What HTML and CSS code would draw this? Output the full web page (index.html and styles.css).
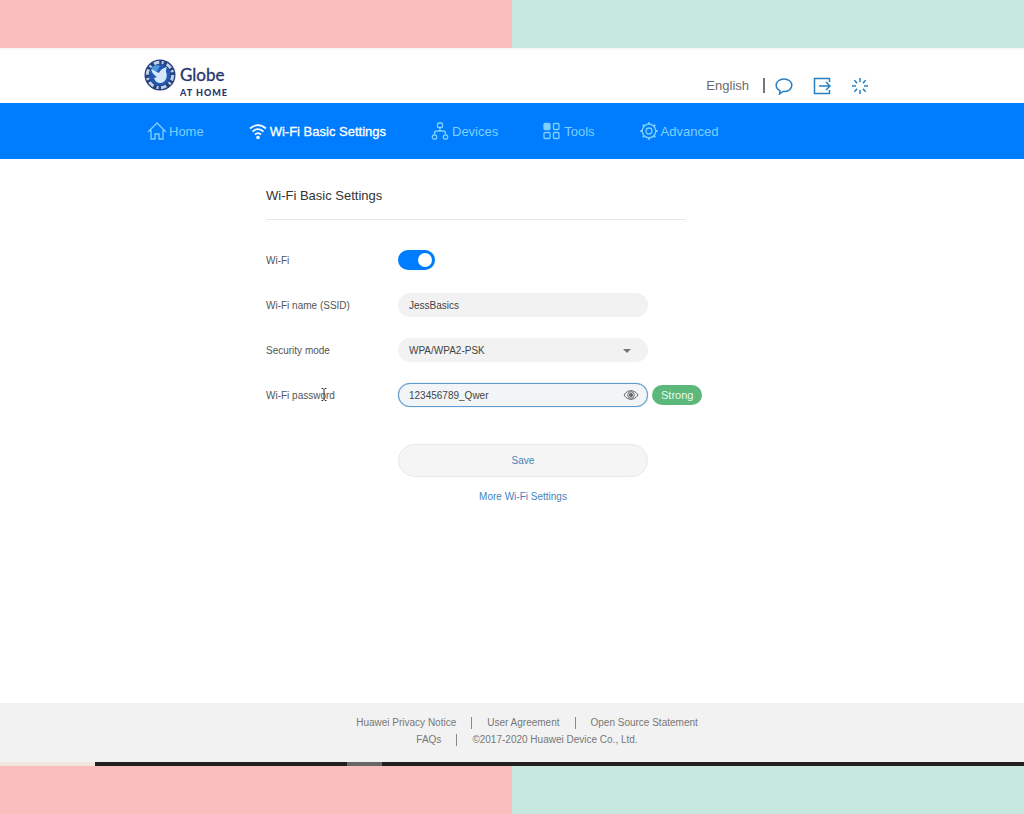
FILE: index.html
```html
<!DOCTYPE html>
<html lang="en">
<head>
<meta charset="utf-8">
<meta name="viewport" content="width=device-width, initial-scale=1">
<title>Wi-Fi Basic Settings</title>
<link rel="stylesheet" href="styles.css">
</head>
<body>
<div class="screen">
  <header class="header">
    <div class="wrap header-row">
      <div class="brand">
        <svg class="brand-mark" viewBox="0 0 32 32" aria-hidden="true">
          <circle cx="16" cy="16" r="15.5" fill="#27437f"/>
          <circle cx="16" cy="16" r="12.7" fill="none" stroke="#c3d0e6" stroke-width="3" stroke-dasharray="5.5 2.5 2 3.3"/>
          <circle cx="16" cy="16" r="10.6" fill="#2459b3"/>
          <path d="M8 8c3-2 6-2 8-1l-3 5-5 2z" fill="#4d9ae0"/>
          <path d="M7 10c3 1 5 3 8 4 1-3 4-5 8-6-1 2-1 3-1 5 2 4 0 10-5 11-4 0-6-2-7-5l3-1c-3-2-5-4-6-8z" fill="#d4e8fa"/>
        </svg>
        <div class="brand-text"><span class="brand-name">Globe</span><span class="brand-sub">AT HOME</span></div>
      </div>
      <div class="tools">
        <button class="language" type="button">English</button>
        <span class="tool-divider"></span>
        <button class="tool" type="button" aria-label="Messages">
          <svg viewBox="0 0 18 18"><path d="M5 13.6C2.500 12.500 1.200 10.600 1.200 8.300c0-3.700 3.400-6.300 7.800-6.300s7.800 2.600 7.800 6.300-3.400 6.200-7.800 6.200H8L4.500 17z"/></svg>
        </button>
        <button class="tool" type="button" aria-label="Log out">
          <svg viewBox="0 0 18 18"><path d="M16.500 5V1.500h-15v15h15V13M6 9h11M13 5l4 4-4 4"/></svg>
        </button>
        <button class="tool" type="button" aria-label="Status">
          <svg viewBox="0 0 18 18"><path d="M9 1v4M9 13v4M1 9h4M13 9h4M3.300 3.300l2.800 2.800M11.900 11.900l2.800 2.800M3.300 14.700l2.800-2.800M11.900 6.100l2.800-2.800"/></svg>
        </button>
      </div>
    </div>
  </header>
  <nav class="nav">
    <div class="wrap nav-row">
      <a class="nav-link" href="#home">
        <svg viewBox="0 0 20 20"><path d="M1 11l9-9 9 9M4 9v9h4v-5h4v5h4V9"/></svg>Home</a>
      <a class="nav-link active" href="#wifi" aria-current="page">
        <svg viewBox="0 0 20 20"><path stroke-width="1.800" d="M2 7.500c5-4.400 11-4.400 16 0M4.500 10.600c3.400-3 7.600-3 11 0M7 13.500c1.800-1.600 4.200-1.600 6 0"/><circle cx="10" cy="16.500" r="1.800" fill="currentColor" stroke="none"/></svg>Wi-Fi Basic Settings</a>
      <a class="nav-link" href="#devices">
        <svg viewBox="0 0 20 20"><rect x="7.500" y="2" width="5" height="4.500" rx="1"/><path d="M10 6.500V10M4.500 14v-1.500C4.500 11 5 10 6.500 10h7c1.500 0 2 1 2 2.500V14"/><circle cx="4.500" cy="16" r="2.200"/><circle cx="15.500" cy="16" r="2.200"/></svg>Devices</a>
      <a class="nav-link" href="#tools">
        <svg viewBox="0 0 20 20"><rect x="2" y="2.500" width="6" height="6" rx="1" fill="currentColor"/><rect x="11.500" y="2.500" width="5.500" height="6" rx="1"/><rect x="2" y="11.500" width="6" height="6" rx="1"/><rect x="11.500" y="11.500" width="5.500" height="6" rx="1"/></svg>Tools</a>
      <a class="nav-link" href="#advanced">
        <svg viewBox="0 0 20 20"><circle cx="10" cy="10" r="6.800"/><path stroke-width="2.200" d="M10 1.300v2M10 16.700v2M1.300 10h2M16.700 10h2M3.900 3.900l1.300 1.300M14.800 14.800l1.300 1.300M3.900 16.100l1.300-1.300M14.800 5.200l1.300-1.300"/><circle cx="10" cy="10" r="3"/></svg>Advanced</a>
    </div>
  </nav>
  <main class="wrap main">
    <form class="settings">
      <h1 class="title">Wi-Fi Basic Settings</h1>
      <div class="row">
        <label class="label" for="wifi-on">Wi-Fi</label>
        <input class="switch" id="wifi-on" type="checkbox" role="switch" checked>
      </div>
      <div class="row">
        <label class="label" for="ssid">Wi-Fi name (SSID)</label>
        <input class="field" id="ssid" type="text" value="JessBasics">
      </div>
      <div class="row">
        <label class="label" for="security">Security mode</label>
        <div class="control">
          <select class="field" id="security"><option>WPA/WPA2-PSK</option></select>
          <svg class="caret" viewBox="0 0 8 4" aria-hidden="true"><path d="M0 0h8L4 4z"/></svg>
        </div>
      </div>
      <div class="row">
        <label class="label" for="password">Wi-Fi password
          <svg class="cursor" viewBox="0 0 6 13" aria-hidden="true"><path d="M.5.500h1.500l1 1 1-1h1.500M3 1.500v10M.5 12.500H2l1-1 1 1h1.500"/></svg>
        </label>
        <div class="control">
          <input class="field focused" id="password" type="text" value="123456789_Qwer">
          <button class="reveal" type="button" aria-label="Hide password">
            <svg viewBox="0 0 16 12"><path d="M1 6c3.500-5.800 10.500-5.800 14 0-3.500 5.800-10.500 5.800-14 0z"/><circle cx="8" cy="6" r="3.300"/><circle cx="8" cy="6" r="1.600" fill="currentColor"/></svg>
          </button>
        </div>
        <span class="strength">Strong</span>
      </div>
      <div class="actions">
        <button class="save" type="button">Save</button>
        <a class="more" href="#more">More Wi-Fi Settings</a>
      </div>
    </form>
  </main>
  <footer class="footer">
    <div class="footer-row">
      <a href="#privacy">Huawei Privacy Notice</a><span class="bar"></span><a href="#agreement">User Agreement</a><span class="bar"></span><a href="#source">Open Source Statement</a>
    </div>
    <div class="footer-row">
      <a href="#faqs">FAQs</a><span class="bar"></span><span>©2017-2020 Huawei Device Co., Ltd.</span>
    </div>
  </footer>
  <div class="taskbar"><span class="task-start"></span><span class="task-item"></span></div>
</div>
</body>
</html>
```
FILE: styles.css
```css
* { box-sizing: border-box; }
body {
  margin: 0;
  min-height: 100vh;
  padding: 48px 0;
  display: flex;
  flex-direction: column;
  background: linear-gradient(90deg, #fabebc 50%, #c7e8e1 50%);
  font-family: "Liberation Sans", Arial, sans-serif;
  font-size: 10px;
  color: #555;
}
button, input, select { font: inherit; color: inherit; }
button { padding: 0; border: 0; background: none; }
a { color: inherit; text-decoration: none; }
svg { display: block; fill: none; stroke: currentColor; }

.screen { flex: 1; display: flex; flex-direction: column; background: #fff; }
.wrap { width: 100%; max-width: 736px; margin: 0 auto; }

.header { border-top: 2px solid #f8f8f8; }
.header-row { display: flex; justify-content: space-between; height: 53px; }
.brand { display: flex; gap: 4px; padding-top: 9px; color: #26346f; }
.brand-mark { width: 32px; height: 32px; stroke: none; }
.brand-text { display: flex; flex-direction: column; padding-top: 6px; }
.brand-name { font: 17px/20px Lato, sans-serif; -webkit-text-stroke: 0.3px #26346f; }
.brand-sub { font: 900 9px/15px Lato, sans-serif; letter-spacing: 1px; }
.tools { display: flex; align-items: center; padding: 18px 11px 0 0; }
.language { font-size: 13px; color: #6a6a6a; }
.tool-divider { width: 2px; height: 15px; margin: 0 10px 0 14px; background: #777; }
.tool { margin-right: 20px; color: #2581c4; }
.tool:last-child { margin-right: 0; }
.tool svg { width: 18px; height: 18px; stroke-width: 1.500; }

.nav { background: #007dff; }
.nav-row { display: flex; align-items: center; gap: 44px; height: 56px; padding-left: 3px; }
.nav-link { display: flex; align-items: center; gap: 2px; font-size: 13px; color: #7fd0ff; white-space: nowrap; }
.nav-link svg { width: 20px; height: 20px; stroke-width: 1.300; }
.nav-link.active { color: #fff; -webkit-text-stroke: 0.3px #fff; }

.main { flex: 1; padding: 28px 0 0 122px; }
.settings { display: flex; flex-direction: column; }
.title { width: 420px; margin: 0 0 28px; padding-bottom: 14px; border-bottom: 1px solid #e6e6e6; font-size: 13px; line-height: 18px; font-weight: 400; color: #333; }
.row { display: flex; align-items: center; height: 24px; margin-bottom: 21px; }
.label { position: relative; width: 132px; }
.cursor { position: absolute; left: 55px; top: -2px; width: 6px; height: 13px; color: #333; }
.control { position: relative; }
.switch { appearance: none; width: 37px; height: 20px; margin: 0; padding: 3px; border-radius: 10px; background: #007dff; }
.switch::before { content: ""; display: block; width: 14px; height: 14px; margin-left: 17px; border-radius: 50%; background: #fff; }
.field { display: block; appearance: none; width: 250px; height: 24px; padding: 0 11px; border: 0; border-radius: 12px; outline: 0; background: #f2f2f2; color: #444; }
.focused { border: 1px solid #5b9bd0; padding: 0 10px; background: #f1f5f8; box-shadow: 0 0 1px #5b9bd0; }
.caret { position: absolute; right: 17px; top: 11px; width: 8px; height: 4px; fill: #777; stroke: none; }
.reveal { position: absolute; right: 9px; top: 6px; color: #666; }
.reveal svg { width: 16px; height: 12px; }
.strength { margin-left: 4px; padding: 0 9px; border-radius: 10px; background: #5cb87a; color: #e8fbee; font-size: 11px; line-height: 20px; }
.actions { display: flex; flex-direction: column; align-items: center; gap: 14px; width: 250px; margin: 16px 0 0 132px; color: #4583bd; }
.save { width: 100%; height: 33px; border: 1px solid #e8e8e8; border-radius: 17px; background: #f5f5f5; }

.footer { padding: 11px 0 14px 30px; background: #f2f2f2; color: #777; line-height: 17px; }
.footer-row { display: flex; justify-content: center; align-items: center; }
.bar { width: 1px; height: 12px; margin: 0 15px; background: #888; }
.taskbar { display: flex; height: 4px; background: #221f20; }
.task-start { width: 95px; background: #f3e6dc; }
.task-item { width: 35px; margin-left: 252px; background: #666; }
```
